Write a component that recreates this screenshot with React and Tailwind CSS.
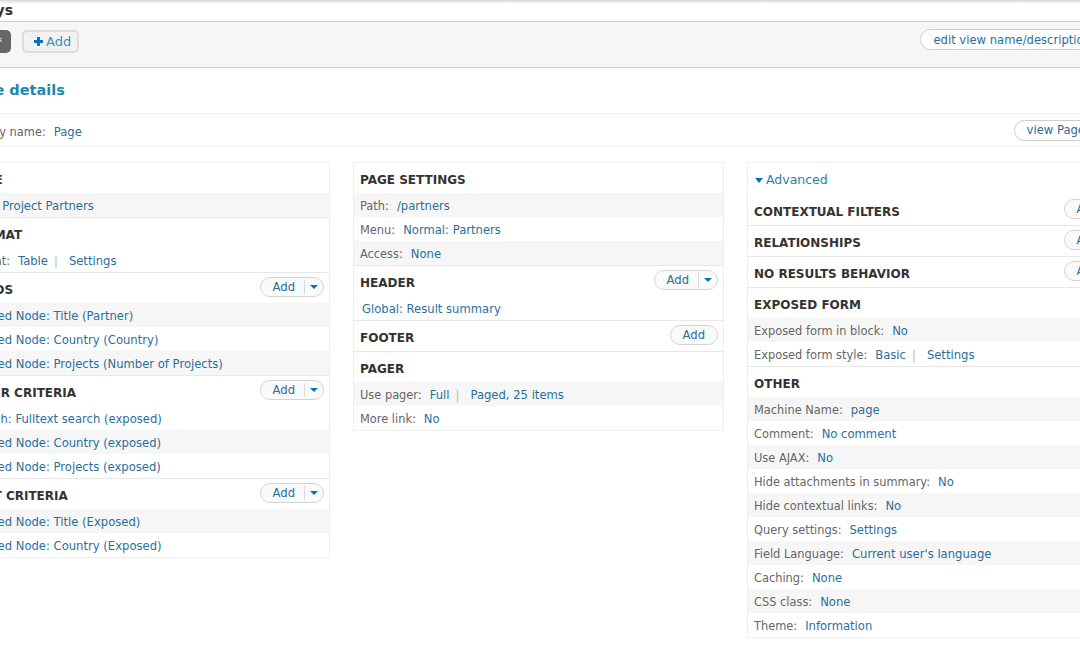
function L({ children }) { return <a className="text-[11.6px] text-[#2a6f9c]">{children}</a>; }
function Pill({ caret }) {
  return (
    <span className={`flex items-center h-[20px] mb-[2px] rounded-full border border-[#d4d4d4] bg-[#fafafa] text-[11.6px] text-[#2a6f9c] pl-[12px] shrink-0 ${caret ? "pr-[1px]" : "pr-[3px]"}`}>
      <span className="pr-[9px] pt-[1px]">Add</span>
      {caret && <span className="flex items-center justify-center w-[18px] h-[14px] border-l border-[#d8d8d8]"><span className="w-0 h-0 border-x-[4px] border-x-transparent border-t-[4px] border-t-[#0074bd]" /></span>}
    </span>
  );
}
function Title({ text, add, caret }) {
  return (
    <div className="flex items-center justify-between h-[30px] pl-[6px] pr-[5px]">
      <h3 className="font-bold text-[12px] text-[#333] pt-[3px]">{text}</h3>
      {add && <Pill caret={caret} />}
    </div>
  );
}
function Row({ gray, label, links, pad }) {
  return (
    <div className={`flex items-center h-[24px] pt-[3px] ${pad ? "pl-[8px]" : "pl-[6px]"} whitespace-nowrap ${gray ? "bg-[#f6f6f6]" : ""}`}>
      {label && <span className="text-[11.4px] text-[#666] mr-[8px]">{label}</span>}
      {links.map((l, i) => (
        <span key={l} className="flex items-center">
          {i > 0 && <span className="text-[11.6px] text-[#bbb] ml-[6px] mr-[11px]">|</span>}
          <L>{l}</L>
        </span>
      ))}
    </div>
  );
}
function Section({ title, add, caret, rows = [], last }) {
  return (
    <section className={last ? "" : "border-b border-[#e8e8e8]"}>
      <Title text={title} add={add} caret={caret} />
      {rows.map((r, i) => <Row key={i} gray={r.gray} label={r.label} links={r.links} pad={r.pad} />)}
    </section>
  );
}
const left = [
  { title: "TITLE", rows: [{ gray: true, label: "Title:", links: ["Project Partners"] }] },
  { title: "FORMAT", rows: [{ label: "Format:", links: ["Table", "Settings"] }] },
  { title: "FIELDS", add: true, caret: true, rows: [
    { gray: true, pad: true, links: ["Related Node: Title (Partner)"] },
    { pad: true, links: ["Related Node: Country (Country)"] },
    { gray: true, pad: true, links: ["Related Node: Projects (Number of Projects)"] }] },
  { title: "FILTER CRITERIA", add: true, caret: true, rows: [
    { pad: true, links: ["Search: Fulltext search (exposed)"] },
    { gray: true, pad: true, links: ["Related Node: Country (exposed)"] },
    { pad: true, links: ["Related Node: Projects (exposed)"] }] },
  { title: "SORT CRITERIA", add: true, caret: true, last: true, rows: [
    { gray: true, pad: true, links: ["Related Node: Title (Exposed)"] },
    { pad: true, links: ["Related Node: Country (Exposed)"] }] },
];
const mid = [
  { title: "PAGE SETTINGS", rows: [
    { gray: true, label: "Path:", links: ["/partners"] },
    { label: "Menu:", links: ["Normal: Partners"] },
    { gray: true, label: "Access:", links: ["None"] }] },
  { title: "HEADER", add: true, caret: true, rows: [{ pad: true, links: ["Global: Result summary"] }] },
  { title: "FOOTER", add: true },
  { title: "PAGER", last: true, rows: [
    { gray: true, label: "Use pager:", links: ["Full", "Paged, 25 items"] },
    { label: "More link:", links: ["No"] }] },
];
const right = [
  { title: "CONTEXTUAL FILTERS", add: true, caret: true },
  { title: "RELATIONSHIPS", add: true, caret: true },
  { title: "NO RESULTS BEHAVIOR", add: true, caret: true },
  { title: "EXPOSED FORM", rows: [
    { gray: true, label: "Exposed form in block:", links: ["No"] },
    { label: "Exposed form style:", links: ["Basic", "Settings"] }] },
  { title: "OTHER", last: true, rows: [
    { gray: true, label: "Machine Name:", links: ["page"] },
    { label: "Comment:", links: ["No comment"] },
    { gray: true, label: "Use AJAX:", links: ["No"] },
    { label: "Hide attachments in summary:", links: ["No"] },
    { gray: true, label: "Hide contextual links:", links: ["No"] },
    { label: "Query settings:", links: ["Settings"] },
    { gray: true, label: "Field Language:", links: ["Current user's language"] },
    { label: "Caching:", links: ["None"] },
    { gray: true, label: "CSS class:", links: ["None"] },
    { label: "Theme:", links: ["Information"] }] },
];
function Col({ wide, children }) {
  return <div className={`${wide ? "w-[387px]" : "w-[371px]"} shrink-0 border border-[#eee] self-start`}>{children}</div>;
}
export default function App() {
  return (
    <div className="w-[1080px] h-[650px] overflow-hidden bg-white font-['DejaVu_Sans',sans-serif]">
      <div className="w-[1240px] -ml-[41px]">
        <div className="h-[4px] bg-gradient-to-b from-[#d8d8d8] to-white" />
        <div className="h-[17px] flex items-center"><h2 className="-ml-[12px] -mt-[5px] font-bold text-[14px] text-[#333] leading-none">Displays</h2></div>
        <div className="h-[47px] bg-[#f6f6f6] border-y border-[#ccc] flex items-start justify-between pt-[7px] pr-[95px]">
          <div className="flex items-center gap-[11px] mt-[1px]">
            <span className="flex items-center h-[23px] w-[52px] rounded-[5px] bg-[#666] text-white text-[12px] pl-[8px]">Page*</span>
            <span className="flex items-center h-[23px] rounded-[5px] border-2 border-[#ddd] bg-[#f2f2f2] text-[13px] text-[#3c8fb5] pl-[10px] pr-[6px]">
              <svg viewBox="0 0 10 10" className="w-[9px] h-[9px] mr-[3px]"><path d="M3.4 0h3.2v3.4H10v3.2H6.6V10H3.4V6.6H0V3.4h3.4z" fill="#0074bd" /></svg>
              Add
            </span>
          </div>
          <span className="flex items-center h-[21px] rounded-full border border-[#ccc] bg-white text-[11.6px] text-[#2a6f9c] pt-[2px] px-[12px]">edit view name/description</span>
        </div>
        <div className="h-[45px] flex items-center pl-[5px] pt-[1px]">
          <h2 className="font-bold text-[14.5px] text-[#1d87ae]">Page details</h2>
        </div>
        <div className="h-[34px] border-y border-[#eee] flex items-center justify-between pr-[101px]">
          <div className="pl-[5px] pt-[1px]"><span className="text-[11.4px] text-[#666] mr-[8px]">Display name:</span><L>Page</L></div>
          <span className="flex items-center h-[21px] rounded-full border border-[#ccc] bg-white text-[11.6px] text-[#2a6f9c] pt-[1px] px-[12px]">view Page</span>
        </div>
        <div className="flex gap-[23px] mt-[15px] items-start">
          <Col>{left.map((s) => <Section key={s.title} {...s} />)}</Col>
          <Col>{mid.map((s) => <Section key={s.title} {...s} />)}</Col>
          <Col wide>
            <div className="h-[32px] pl-[7px] pt-[3px] flex items-center text-[12.5px] text-[#2a7fa5]"><span className="w-0 h-0 border-x-[4.5px] border-x-transparent border-t-[5px] border-t-[#0074bd] mr-[3px]" />Advanced</div>
            {right.map((s) => <Section key={s.title} {...s} />)}
          </Col>
        </div>
      </div>
    </div>
  );
}
